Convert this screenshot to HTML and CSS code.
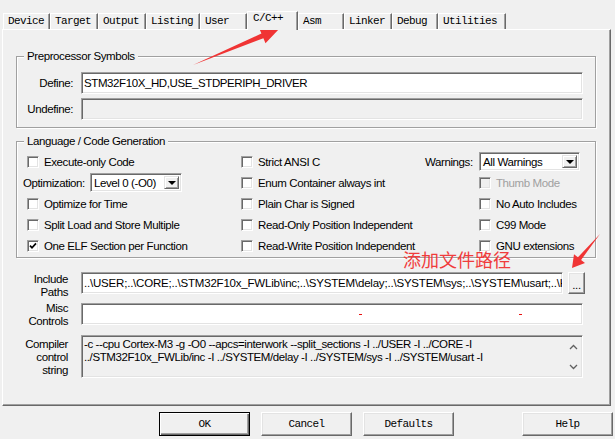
FILE: index.html
```html
<!DOCTYPE html>
<html lang="en">
<head>
    <meta charset="UTF-8">
    <meta name="viewport" content="width=device-width, initial-scale=1.0">
    <title>Options for Target - C/C++</title>
    <link rel="stylesheet" href="styles.css">
</head>
<body>
    <div class="tabs">
        <div class="tab t-device">Device</div>
        <div class="tab t-target">Target</div>
        <div class="tab t-output">Output</div>
        <div class="tab t-listing">Listing</div>
        <div class="tab t-user">User</div>
        <div class="tab t-cc active">C/C++</div>
        <div class="tab t-asm">Asm</div>
        <div class="tab t-linker">Linker</div>
        <div class="tab t-debug">Debug</div>
        <div class="tab t-util">Utilities</div>
    </div>

    <div class="panel">
        <fieldset class="group">
            <legend>Preprocessor Symbols</legend>
            <div class="sym-grid">
                <span class="lbl">Define:</span>
                <div class="field">STM32F10X_HD,USE_STDPERIPH_DRIVER</div>
                <span class="lbl">Undefine:</span>
                <div class="field disabled"></div>
            </div>
        </fieldset>

        <fieldset class="group group-lang">
            <legend>Language / Code Generation</legend>
            <div class="lang-grid">
                <label class="check c1"><span class="box"></span>Execute-only Code</label>
                <label class="check"><span class="box"></span>Strict ANSI C</label>
                <div class="combo-row">
                    <span class="combo-lbl warn-lbl">Warnings:</span>
                    <div class="select warn"><span class="val">All Warnings</span><span class="drop"></span></div>
                </div>

                <div class="combo-row c1-lbl">
                    <span class="combo-lbl opt-lbl">Optimization:</span>
                    <div class="select opt"><span class="val">Level 0 (-O0)</span><span class="drop"></span></div>
                </div>
                <label class="check"><span class="box"></span>Enum Container always int</label>
                <label class="check c3 off"><span class="box"></span>Thumb Mode</label>

                <label class="check c1"><span class="box"></span>Optimize for Time</label>
                <label class="check"><span class="box"></span>Plain Char is Signed</label>
                <label class="check c3"><span class="box"></span>No Auto Includes</label>

                <label class="check c1"><span class="box"></span>Split Load and Store Multiple</label>
                <label class="check"><span class="box"></span>Read-Only Position Independent</label>
                <label class="check c3"><span class="box"></span>C99 Mode</label>

                <label class="check c1"><span class="box"><svg width="8" height="8" viewBox="0 0 8 8"><path d="M1 3.6 L3 5.8 L7 1.4" /></svg></span>One ELF Section per Function</label>
                <label class="check"><span class="box"></span>Read-Write Position Independent</label>
                <label class="check c3"><span class="box"></span>GNU extensions</label>
            </div>
        </fieldset>

        <div class="extra">
            <span class="lbl2 l-inc">Include<br>Paths</span>
            <div class="inc-row">
                <div class="field inc">..\USER;..\CORE;..\STM32F10x_FWLib\inc;..\SYSTEM\delay;..\SYSTEM\sys;..\SYSTEM\usart;..\HARDWARE\LED;..\HARDWARE\KEY</div>
                <div class="btn3d dots">...</div>
            </div>

            <span class="lbl2 l-misc">Misc<br>Controls</span>
            <div class="field misc"><span class="mark m1"></span><span class="mark m2"></span></div>

            <span class="lbl2 l-cmd">Compiler<br>control<br>string</span>
            <div class="field cmd">
                <div class="cmd-text">-c --cpu Cortex-M3 -g -O0 --apcs=interwork --split_sections -I ../USER -I ../CORE -I<br>../STM32F10x_FWLib/inc -I ../SYSTEM/delay -I ../SYSTEM/sys -I ../SYSTEM/usart -I</div>
                <div class="scroll">
                    <svg width="9" height="6" viewBox="0 0 9 6"><path d="M1 5 L4.5 1.5 L8 5" /></svg>
                    <svg width="9" height="6" viewBox="0 0 9 6"><path d="M1 1 L4.5 4.5 L8 1" /></svg>
                </div>
            </div>
        </div>
    </div>

    <div class="buttons">
        <div class="btn3d btn default">OK</div>
        <div class="btn3d btn">Cancel</div>
        <div class="btn3d btn">Defaults</div>
        <div class="btn3d btn help">Help</div>
    </div>

    <!-- annotation drawn over the dialog -->
    <div class="note">添加文件路径</div>
    <svg class="arrows" width="615" height="439" viewBox="0 0 615 439">
        <polygon points="193,65 261.4,33.6 259.3,28.5 279,29 265.5,43.3 263.4,38.2" />
        <polygon points="600,234 577.9,257.3 574,254.2 572,268 585,263 581.1,259.9" />
    </svg>
</body>
</html>
```

FILE: styles.css
```css
body {
    margin: 0;
    width: 615px;
    height: 439px;
    overflow: hidden;
    position: relative;
    background: #f0f0f0;
    font-family: "Liberation Sans", Arial, sans-serif;
    font-size: 11.5px;
    letter-spacing: -0.4px;
    color: #000;
}

/* tab strip */
.tabs {
    display: flex;
    align-items: flex-end;
    height: 29px;
    padding-left: 3px;
    position: relative;
    z-index: 2;
    font-family: "Liberation Mono", monospace;
    font-size: 11px;
    letter-spacing: -0.6px;
}
.tab {
    box-sizing: border-box;
    height: 16px;
    line-height: 15px;
    padding-left: 4px;
    border-top: 1px solid #fff;
    border-left: 1px solid #fff;
    border-right: 1px solid #696969;
    box-shadow: inset -1px 0 #a0a0a0;
    white-space: nowrap;
}
.tab.active {
    height: 19px;
    margin-bottom: -1px;
    line-height: 13px;
    padding-left: 5px;
    background: #f0f0f0;
}
.t-device { width: 47px; }
.t-target { width: 48px; }
.t-output { width: 48px; }
.t-listing { width: 54px; }
.t-user { width: 47px; }
.t-cc { width: 51px; }
.t-asm { width: 46px; }
.t-linker { width: 48px; }
.t-debug { width: 46px; }
.t-util { width: 68px; }

/* page body */
.panel {
    box-sizing: border-box;
    width: 609px;
    height: 377px;
    margin-left: 2px;
    padding: 19px 0 0 13px;
    border-top: 1px solid #fff;
    border-left: 1px solid #fff;
    border-right: 1px solid #696969;
    border-bottom: 1px solid #696969;
    box-shadow: inset -1px -1px #a0a0a0;
}

.group {
    box-sizing: border-box;
    width: 580px;
    margin: 0;
    padding: 0;
    min-width: 0;
    border: 1px solid #a0a0a0;
    box-shadow: inset 1px 1px #fff, 1px 1px #fff;
}
.group legend {
    margin-left: 7px;
    padding: 0 3px;
    line-height: 14px;
    background: #f0f0f0;
}
.group-lang {
    margin-top: 6px;
}

.sym-grid {
    display: grid;
    grid-template-columns: 56px 502px;
    grid-auto-rows: 22px;
    column-gap: 8px;
    row-gap: 4px;
    align-items: center;
    padding: 9px 0 7px;
}
.lbl {
    text-align: right;
}

/* sunken edit box */
.field {
    box-sizing: border-box;
    height: 22px;
    line-height: 20px;
    padding: 0 2px;
    background: #fff;
    border: 1px solid;
    border-color: #a0a0a0 #fff #fff #a0a0a0;
    box-shadow: inset 1px 1px #696969, inset -1px -1px #e3e3e3;
    white-space: nowrap;
    overflow: hidden;
}
.field.disabled {
    background: #f0f0f0;
}

.lang-grid {
    display: grid;
    grid-template-columns: 224px 184px 1fr;
    grid-auto-rows: 21px;
    align-items: center;
    padding: 3px 0 1px;
}
.check {
    display: flex;
    align-items: center;
    gap: 5px;
    white-space: nowrap;
}
.check.c1 { padding-left: 10px; }
.check.c3 { padding-left: 54px; }
.box {
    box-sizing: border-box;
    width: 12px;
    height: 12px;
    flex: none;
    display: flex;
    align-items: center;
    justify-content: center;
    background: #fff;
    border: 1px solid;
    border-color: #a0a0a0 #fff #fff #a0a0a0;
    box-shadow: inset 1px 1px #696969, inset -1px -1px #e3e3e3;
}
.box svg path {
    fill: none;
    stroke: #000;
    stroke-width: 1.7;
}
.check.off {
    color: #a0a0a0;
}
.check.off .box {
    background: #f0f0f0;
}

.combo-row {
    display: flex;
    align-items: center;
}
.c1-lbl { padding-left: 6px; }
.opt-lbl { width: 67px; }
.warn-lbl { width: 54px; }

.select {
    box-sizing: border-box;
    height: 19px;
    display: flex;
    background: #fff;
    border: 1px solid;
    border-color: #a0a0a0 #fff #fff #a0a0a0;
    box-shadow: inset 1px 1px #696969, inset -1px -1px #e3e3e3;
    padding: 2px 2px 2px 3px;
}
.select.opt { width: 92px; }
.select.warn { width: 101px; }
.select .val {
    flex: 1;
    line-height: 15px;
    white-space: nowrap;
}
.drop {
    box-sizing: border-box;
    width: 15px;
    display: flex;
    align-items: center;
    justify-content: center;
    background: #f0f0f0;
    border: 1px solid;
    border-color: #e3e3e3 #696969 #696969 #e3e3e3;
    box-shadow: inset 1px 1px #fff, inset -1px -1px #a0a0a0;
}
.drop::after {
    content: "";
    border-top: 4px solid #000;
    border-left: 4px solid transparent;
    border-right: 4px solid transparent;
}

/* include / misc / compiler rows */
.extra {
    display: grid;
    grid-template-columns: 52px 504px;
    grid-template-rows: 22px 23px 43px;
    column-gap: 13px;
    row-gap: 9px;
    margin-top: 14px;
}
.lbl2 {
    text-align: right;
    line-height: 13px;
}
.l-inc { padding-top: 1px; }
.l-misc { margin-top: -1px; }
.l-cmd { padding-top: 3px; }

.inc-row {
    display: flex;
    gap: 5px;
}
.field.inc {
    width: 482px;
    flex: none;
    letter-spacing: -0.2px;
}
.field.misc {
    width: 502px;
    position: relative;
}
.mark {
    position: absolute;
    top: 10px;
    width: 3px;
    height: 1px;
    background: #e81010;
}
.m1 { left: 277px; }
.m2 { left: 437px; }

.field.cmd {
    width: 502px;
    height: 43px;
    display: flex;
    background: #f0f0f0;
    padding: 1px 1px 1px 2px;
    line-height: 12.5px;
}
.cmd-text {
    flex: 1;
    overflow: hidden;
    white-space: nowrap;
    padding-top: 1px;
}
.scroll {
    width: 16px;
    display: flex;
    flex-direction: column;
    align-items: center;
    justify-content: space-between;
    padding: 7px 0 6px;
}
.scroll svg path {
    fill: none;
    stroke: #606060;
    stroke-width: 1.3;
}

/* raised buttons */
.btn3d {
    box-sizing: border-box;
    background: #f0f0f0;
    border: 1px solid;
    border-color: #fff #696969 #696969 #fff;
    box-shadow: inset -1px -1px #a0a0a0, inset 1px 1px #e3e3e3;
    text-align: center;
}
.dots {
    width: 17px;
    height: 22px;
    line-height: 24px;
    flex: none;
}

.buttons {
    display: flex;
    gap: 11px;
    padding: 6px 0 0 159px;
    font-family: "Liberation Mono", monospace;
    font-size: 11px;
    letter-spacing: -0.6px;
}
.btn {
    width: 91px;
    height: 24px;
    line-height: 22px;
}
.btn.default {
    border-color: #000;
    box-shadow: inset 1px 1px #fff, inset -1px -1px #696969, inset -2px -2px #a0a0a0;
}
.btn.help {
    margin-left: 57px;
}

/* red annotation */
.note {
    position: absolute;
    left: 403px;
    top: 250px;
    font-family: "Noto Sans CJK SC", sans-serif;
    font-size: 18px;
    line-height: 18px;
    letter-spacing: 0;
    color: #f03c3c;
}
.arrows {
    position: absolute;
    left: 0;
    top: 0;
    pointer-events: none;
}
.arrows polygon {
    fill: #f03434;
}
```
